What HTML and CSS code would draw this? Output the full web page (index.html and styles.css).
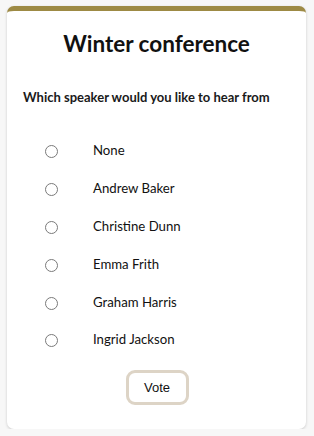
FILE: index.html
```html
<!DOCTYPE html>
<html>
<head>
<meta charset="utf-8">
<link rel="stylesheet" href="styles.css">
</head>
<body>
<div class="card">
  <h1 class="title">Winter conference</h1>
  <p class="question">Which speaker would you like to hear from</p>
  <ul class="options">
    <li class="option"><span class="radio"></span><span class="label">None</span></li>
    <li class="option"><span class="radio"></span><span class="label">Andrew Baker</span></li>
    <li class="option"><span class="radio"></span><span class="label">Christine Dunn</span></li>
    <li class="option"><span class="radio"></span><span class="label">Emma Frith</span></li>
    <li class="option"><span class="radio"></span><span class="label">Graham Harris</span></li>
    <li class="option"><span class="radio"></span><span class="label">Ingrid Jackson</span></li>
  </ul>
  <div class="actions"><button class="vote">Vote</button></div>
</div>
</body>
</html>
```
FILE: styles.css
```css
html, body {
  margin: 0;
  padding: 0;
  background: #f7f7f7;
}
body {
  padding: 6px 8px 0 7px;
  font-family: Lato, "Open Sans", sans-serif;
  color: #111;
}
.card {
  background: #fff;
  border-top: 5px solid #9d8a44;
  border-radius: 7px;
  box-shadow: 0 1px 3px rgba(0,0,0,0.18);
  height: 423px;
  box-sizing: border-box;
  padding-top: 19px;
}
.title {
  margin: 0;
  text-align: center;
  font-size: 22.5px;
  line-height: 28px;
  font-weight: 700;
  color: #111;
}
.question {
  margin: 30px 0 0 16px;
  font-size: 13px;
  line-height: 18px;
  font-weight: 700;
  color: #1a1a1a;
}
.options {
  list-style: none;
  margin: 26.5px 0 0 0;
  padding: 0;
}
.option {
  display: flex;
  align-items: center;
  height: 37.8px;
  padding-left: 38px;
}
.radio {
  width: 11px;
  height: 11px;
  border: 1px solid #7a7a7a;
  border-radius: 50%;
  box-sizing: content-box;
  margin-top: 1px;
}
.label {
  margin-left: 35px;
  font-size: 13.2px;
  line-height: 16px;
  margin-bottom: 2px;
  color: #111;
}
.actions {
  display: flex;
  justify-content: center;
  margin-top: 11px;
  padding-left: 1px;
}
.vote {
  width: 63px;
  height: 35px;
  border: 3px solid #ddd4c6;
  border-radius: 9px;
  background: #fff;
  font-family: "Liberation Sans", Arial, sans-serif;
  font-size: 13px;
  color: #111;
  padding: 0;
}
```
